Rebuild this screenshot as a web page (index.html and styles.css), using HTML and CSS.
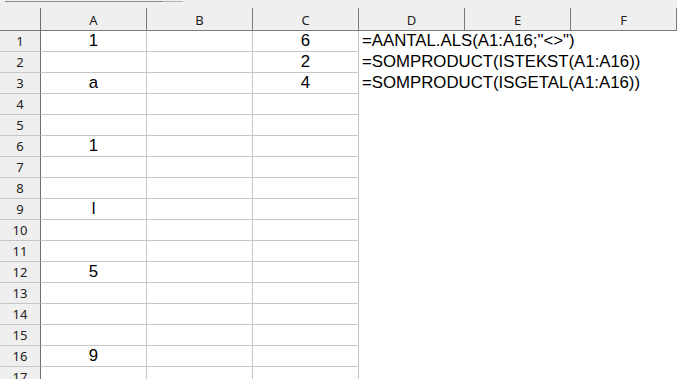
FILE: index.html
```html
<!DOCTYPE html>
<html lang="nl">
<head>
    <meta charset="UTF-8">
    <title>Blad1</title>
    <link rel="stylesheet" href="styles.css">
</head>
<body>
    <div class="strip">
        <div class="scroll"><span class="thumb"></span></div>
    </div>
    <div class="sheet">
        <div class="row head">
            <div class="rh corner"></div>
            <div class="ch">A</div><div class="ch">B</div><div class="ch">C</div>
            <div class="ch">D</div><div class="ch">E</div><div class="ch">F</div>
        </div>
        <div class="row"><div class="rh">1</div><div class="c mid">1</div><div class="c"></div><div class="c mid">6</div><div class="c txt">=AANTAL.ALS(A1:A16;"&lt;&gt;")</div></div>
        <div class="row"><div class="rh">2</div><div class="c"></div><div class="c"></div><div class="c mid">2</div><div class="c txt">=SOMPRODUCT(ISTEKST(A1:A16))</div></div>
        <div class="row"><div class="rh">3</div><div class="c mid">a</div><div class="c"></div><div class="c mid">4</div><div class="c txt">=SOMPRODUCT(ISGETAL(A1:A16))</div></div>
        <div class="row"><div class="rh">4</div><div class="c"></div><div class="c"></div><div class="c"></div></div>
        <div class="row"><div class="rh">5</div><div class="c"></div><div class="c"></div><div class="c"></div></div>
        <div class="row"><div class="rh">6</div><div class="c mid">1</div><div class="c"></div><div class="c"></div></div>
        <div class="row"><div class="rh">7</div><div class="c"></div><div class="c"></div><div class="c"></div></div>
        <div class="row"><div class="rh">8</div><div class="c"></div><div class="c"></div><div class="c"></div></div>
        <div class="row"><div class="rh">9</div><div class="c mid">l</div><div class="c"></div><div class="c"></div></div>
        <div class="row"><div class="rh">10</div><div class="c"></div><div class="c"></div><div class="c"></div></div>
        <div class="row"><div class="rh">11</div><div class="c"></div><div class="c"></div><div class="c"></div></div>
        <div class="row"><div class="rh">12</div><div class="c mid">5</div><div class="c"></div><div class="c"></div></div>
        <div class="row"><div class="rh">13</div><div class="c"></div><div class="c"></div><div class="c"></div></div>
        <div class="row"><div class="rh">14</div><div class="c"></div><div class="c"></div><div class="c"></div></div>
        <div class="row"><div class="rh">15</div><div class="c"></div><div class="c"></div><div class="c"></div></div>
        <div class="row"><div class="rh">16</div><div class="c mid">9</div><div class="c"></div><div class="c"></div></div>
        <div class="row"><div class="rh">17</div><div class="c"></div><div class="c"></div><div class="c"></div></div>
    </div>
</body>
</html>
```

FILE: styles.css
```css
html, body { margin: 0; padding: 0; background: #fff; overflow: hidden; }
body { width: 677px; height: 379px; font-family: "Liberation Sans", Arial, sans-serif; }
.strip { height: 8px; background: #efefef; padding-top: 1px; box-sizing: border-box; }
.scroll { margin-left: 5px; width: 178px; height: 1px; background: #8a8a8a; display: flex; justify-content: flex-end; }
.thumb { width: 20px; height: 1px; background: #b4b4b4; }
.sheet { display: flex; flex-direction: column; }
.row { display: flex; height: 21px; }
.row > div { flex: none; box-sizing: border-box; }
.head { height: 23px; background: #efefef; }
.rh { width: 41px; border-right: 1px solid #6f6f6f; border-bottom: 1px solid #c6c6c6; background: #efefef; color: #222; font-family: "Noto Sans", "Open Sans", sans-serif; font-size: 13px; text-align: center; line-height: 20px; }
.corner { border-bottom: 1px solid #7a7a7a; }
.ch { width: 106px; border-right: 1px solid #7a7a7a; border-bottom: 1px solid #7a7a7a; color: #222; font-family: "Noto Sans", "Open Sans", sans-serif; font-size: 13px; text-align: center; line-height: 24px; }
.c { width: 106px; border-right: 1px solid #c6c6c6; border-bottom: 1px solid #c6c6c6; font-size: 16.8px; line-height: 20px; color: #000; }
.mid { text-align: center; }
.txt { white-space: nowrap; padding-left: 3px; border: none; }
```
